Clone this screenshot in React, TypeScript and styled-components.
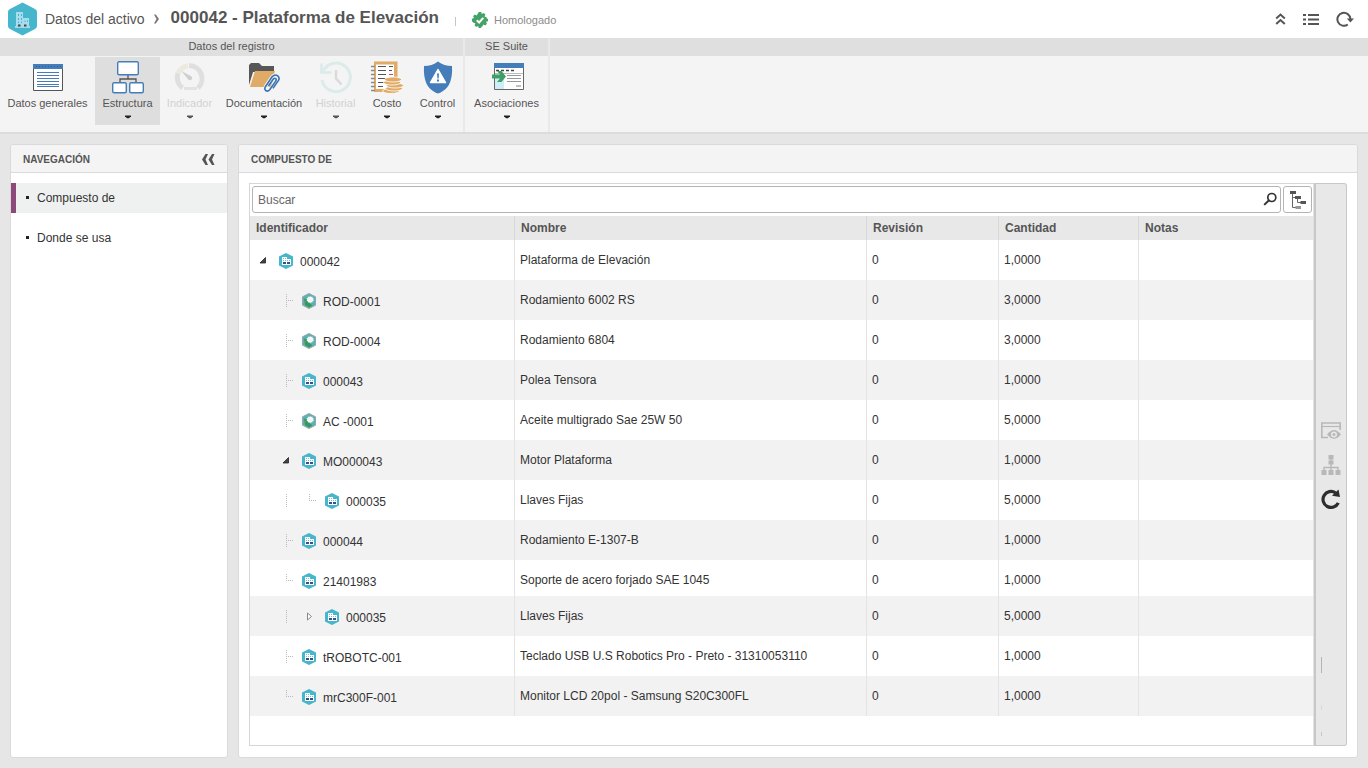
import React from "react";
import styled, { createGlobalStyle, css } from "styled-components";

const GlobalStyle = createGlobalStyle`
  * { box-sizing: border-box; }
  body {
    margin: 0;
    background: #e6e6e6;
    color: #333;
    font-family: "Liberation Sans", Arial, sans-serif;
    font-size: 12px;
    line-height: 16px;
  }
  button { font: inherit; color: inherit; background: none; border: 0; padding: 0; cursor: pointer; }
  svg { display: block; flex: none; }
`;

const Page = styled.div`
  min-height: 100vh;
  display: flex;
  flex-direction: column;
`;

const Header = styled.header`
  display: flex;
  align-items: center;
  height: 38px;
  padding: 0 14px 0 8px;
  background: #fff;
  color: #555;
`;

const Crumb = styled.a`
  margin: 0 8px 0 8px;
  font-size: 14px;
  line-height: 20px;
  color: #555;
  text-decoration: none;
`;

const Title = styled.h1`
  margin: 0 16px 0 11px;
  padding-bottom: 2px;
  font-size: 17px;
  line-height: 20px;
  font-weight: bold;
  color: #555;
`;

const Divider = styled.span`
  width: 1px;
  height: 9px;
  margin: 4px 16px 0 0;
  background: #c4c4c4;
`;

const Status = styled.span`
  display: flex;
  align-items: center;
  gap: 6px;
  padding-top: 2px;
  font-size: 11px;
  color: #8c8c8c;
`;

const HeaderTools = styled.div`
  display: flex;
  align-items: center;
  gap: 17px;
  margin-left: auto;
`;

const Ribbon = styled.div`
  display: flex;
  height: 96px;
  background: #f4f4f4;
  border-bottom: 2px solid #dcdcdc;
`;

const RibbonGroup = styled.section`
  display: flex;
  flex-direction: column;
  border-right: 2px solid #e9e9e9;
`;

const GroupTitle = styled.h2`
  margin: 0;
  height: 18px;
  font-size: 11px;
  line-height: 17px;
  font-weight: normal;
  text-align: center;
  color: #555;
  background: #dfdfdf;
`;

const GroupFill = styled.div`
  flex: 1;
  height: 18px;
  background: #dfdfdf;
`;

const GroupTools = styled.div`
  display: flex;
  padding-top: 1px;
`;

const Tool = styled.button<{ $width: number; $active?: boolean }>`
  display: flex;
  flex-direction: column;
  align-items: center;
  width: ${(p) => p.$width}px;
  height: 68px;
  padding-top: 4px;
  font-size: 11px;
  white-space: nowrap;
  color: #555;
  background: ${(p) => (p.$active ? "#dedede" : "transparent")};
  &:disabled { color: #d2d2d2; cursor: default; }
`;

const ToolLabel = styled.span`
  margin-bottom: 4px;
  line-height: 16px;
`;

const Content = styled.main`
  flex: 1;
  display: flex;
  gap: 10px;
  padding: 10px;
`;

const Panel = styled.section<{ $nav?: boolean }>`
  display: flex;
  flex-direction: column;
  background: #fff;
  border: 1px solid #dadada;
  border-radius: 3px;
  ${(p) =>
    p.$nav
      ? css`flex: 0 0 218px;`
      : css`flex: 1; min-width: 0;`}
`;

const PanelHeader = styled.div`
  display: flex;
  align-items: center;
  justify-content: space-between;
  height: 28px;
  padding: 2px 12px 0;
  background: #f4f4f4;
  border-bottom: 1px solid #dadada;
  border-radius: 3px 3px 0 0;
`;

const PanelTitle = styled.h2`
  margin: 0;
  font-size: 10px;
  font-weight: bold;
  color: #555;
`;

const NavList = styled.nav`
  display: flex;
  flex-direction: column;
  gap: 10px;
  padding-top: 10px;
`;

const NavItem = styled.a<{ $active?: boolean }>`
  display: flex;
  align-items: center;
  gap: 8px;
  height: 30px;
  padding-left: 10px;
  border-left: 5px solid ${(p) => (p.$active ? "#8c4a7b" : "transparent")};
  background: ${(p) => (p.$active ? "#eff1f1" : "transparent")};
  color: #333;
  text-decoration: none;
  &::before {
    content: "";
    width: 3px;
    height: 3px;
    margin-bottom: 2px;
    background: #222;
  }
`;

const PanelBody = styled.div`
  flex: 1;
  display: flex;
  padding: 10px 10px 11px;
`;

const GridBox = styled.div`
  flex: 1;
  min-width: 0;
  border: 1px solid #d6d6d6;
  border-right-color: #e2e2e2;
`;

const SearchBar = styled.div`
  display: flex;
  gap: 2px;
  padding: 2px 1px 3px 2px;
`;

const SearchField = styled.label`
  flex: 1;
  display: flex;
  align-items: center;
  height: 27px;
  padding: 0 3px 0 5px;
  border: 1px solid #b4b4b4;
  border-radius: 3px;
  background: #fff;
`;

const SearchInput = styled.input`
  flex: 1;
  min-width: 0;
  padding: 0;
  border: 0;
  outline: 0;
  font: inherit;
  color: #333;
  background: transparent;
  &::placeholder { color: #666; opacity: 1; }
`;

const TreeButton = styled.button`
  display: flex;
  align-items: center;
  justify-content: center;
  width: 29px;
  height: 27px;
  border: 1px solid #b4b4b4;
  border-radius: 3px;
  background: #fff;
`;

const Table = styled.table`
  width: 100%;
  border-collapse: separate;
  border-spacing: 0;
  table-layout: fixed;
`;

const HeadCell = styled.th`
  height: 24px;
  padding: 0 6px;
  border-left: 1px solid #d8d8d8;
  text-align: left;
  font-weight: bold;
  color: #555;
  background: #e8e8e8;
  &:first-child { border-left: 0; }
`;

const Row = styled.tr<{ $short?: boolean }>`
  height: ${(p) => (p.$short ? 36 : 40)}px;
  background: #fff;
  &:nth-child(even) { background: #f2f2f2; }
`;

const Cell = styled.td`
  padding: 12px 5px 0;
  border-left: 1px solid #e4e4e4;
  vertical-align: top;
`;

const TreeCell = styled.td`
  padding: 13px 0 0 2px;
  vertical-align: top;
`;

const TreeLine = styled.div`
  display: flex;
  height: 16px;
`;

const AssetName = styled.span`
  display: flex;
  gap: 7px;
  padding-left: 4px;
  line-height: 18px;
`;

const SideStrip = styled.aside`
  display: grid;
  grid-template-rows: 1fr auto 1fr;
  width: 33px;
  padding: 0 5px;
  background: #e8e8e8;
  border: 1px solid #c8c8c8;
  border-left-width: 2px;
  border-radius: 0 3px 3px 0;
`;

const StripTools = styled.div`
  grid-row: 2;
  display: flex;
  flex-direction: column;
  gap: 14px;
`;

const StripFoot = styled.div`
  grid-row: 3;
  align-self: end;
  padding-bottom: 8px;
`;

/* ---------- drawings ---------- */

const AssetHexagon = () => (
  <svg width="29" height="34" viewBox="0 0 29 34" aria-hidden="true">
    <path d="M14.500 .5 27 7q2 1 2 3v14q0 2-2 3l-12.500 6.500L2 27q-2-1-2-3V10q0-2 2-3z" fill="#45b6cb" />
    <path d="M8 10h7v14H8z" fill="#a9dcec" />
    <path d="M15 16h6v8h-6z" fill="#a9dcec" />
    <path d="M10 12h1v2h-1zM13 12h1v2h-1zM10 16h1v2h-1zM13 16h1v2h-1zM10 19.500h1v1.500h-1zM13 19.500h1v1.500h-1zM16.500 18.500h1v1.500h-1zM19 18.500h1v1.500h-1z" fill="#45b6cb" />
    <path d="M7 24.500h15v1H7z" fill="#fff" />
    <path d="M10 22.500h2.500v2H10zM16 22.500h2.500v2H16z" fill="#41474f" />
  </svg>
);

const ChevronIcon = () => (
  <svg width="7" height="10" viewBox="0 0 7 10" aria-hidden="true">
    <path d="M1 .5h1.800L6 5 2.800 9.500H1L3.500 5z" fill="#777" />
  </svg>
);

const SealIcon = () => (
  <svg width="16" height="16" viewBox="0 0 16 16" aria-hidden="true">
    <path d="M6.800 0h2.400l.6 2 2-1 1.600 1.600-.9 1.900 2 .7.500 1.600h1v2.400l-2 .6.900 2-1.600 1.600-2-.9-.9 2-1.200.5v1H6.800l-.7-2-2 .9-1.500-1.600.8-2-1.900-.6L0 9.200V6.800l2-.7-.9-1.900L2.700 2.600l2 .9z" fill="#43a266" />
    <path d="m4.800 8.300 2.300 2.200 4.200-4.700" fill="none" stroke="#fff" strokeWidth="2" />
  </svg>
);

const DoubleUpIcon = () => (
  <svg width="11" height="12" viewBox="0 0 11 12" aria-hidden="true">
    <path d="m1.200 5.500 4.300-4 4.300 4M1.200 11l4.300-4 4.300 4" fill="none" stroke="#555" strokeWidth="2" />
  </svg>
);

const ListIcon = () => (
  <svg width="16" height="11" viewBox="0 0 16 11" aria-hidden="true">
    <path d="M0 0h3v2H0zM5 0h11v2H5zM0 4.500h3v2H0zM5 4.500h11v2H5zM0 9h3v2H0zM5 9h11v2H5z" fill="#555" />
  </svg>
);

const ReloadThinIcon = () => (
  <svg width="18" height="16" viewBox="0 0 18 16" aria-hidden="true">
    <path d="M11.800 13.500A6.500 6.500 0 1 1 14.400 8" fill="none" stroke="#555" strokeWidth="2" />
    <path d="M10.800 7.500H18l-3.600 4z" fill="#555" />
  </svg>
);

const CaretDown = ({ faded }: { faded?: boolean }) => (
  <svg width="6" height="4" viewBox="0 0 6 4" aria-hidden="true">
    <path d="M0 .5h6v.8L4 3.300H2L0 1.300z" fill={faded ? "#555" : "#222"} />
  </svg>
);

const GeneralIcon = () => (
  <svg width="34" height="34" viewBox="0 0 34 34" aria-hidden="true">
    <path d="M2.500 4.500h29v25h-29z" fill="#fff" stroke="#555" />
    <path d="M2 3h30v5H2z" fill="#447dba" />
    <path d="M5 5.500h25" stroke="#2d5c92" strokeDasharray="1 2" />
    <path d="M6 11.500h22M6 14.500h22M6 17.500h22M6 20.500h22M6 23.500h22M6 25.500h22" stroke="#447dba" />
  </svg>
);

const StructureIcon = () => (
  <svg width="34" height="34" viewBox="0 0 34 34" aria-hidden="true">
    <path d="M17 14v4M9 21v-3h16v3" fill="none" stroke="#555" strokeWidth="1.300" />
    <g fill="#fff" stroke="#447dba" strokeWidth="1.400">
      <rect x="6.700" y=".7" width="20.600" height="13" rx="1.500" />
      <rect x="1.700" y="21.700" width="13.600" height="10" rx="1.500" />
      <rect x="18.700" y="21.700" width="13.600" height="10" rx="1.500" />
    </g>
  </svg>
);

const GaugeIcon = () => (
  <svg width="34" height="34" viewBox="0 0 34 34" aria-hidden="true">
    <path d="M9.500 27A13 13 0 0 1 5 12" fill="none" stroke="#dfdfdf" strokeWidth="5" />
    <path d="M5.200 12A13 13 0 0 1 15 4.700" fill="none" stroke="#ece9df" strokeWidth="5" />
    <path d="M16 4.600A13 13 0 0 1 25 27" fill="none" stroke="#dfdfdf" strokeWidth="5" />
    <path d="M11 26h13v3H11z" fill="#e3e3e3" />
    <path d="m8.500 10 10 5.500q1.500 2-.5 3.500-2 .5-3-.8z" fill="#cfcfcf" />
  </svg>
);

const DocumentsIcon = () => (
  <svg width="34" height="34" viewBox="0 0 34 34" aria-hidden="true">
    <path d="M2 24V4l2-2h8l3 3h12v6H6z" fill="#575757" />
    <path d="M8 10h20l-4 16H3z" fill="#e0ab66" />
    <path d="m20.500 25 6.500-9.500q2-1.500 3.600.2.900 1.500-.2 3.300l-7 9.500q-2 2.200-4.300.6-1.700-1.600-.4-3.800L25 16q2.500-3 5.500-1.200 2.500 2 .8 4.700" fill="none" stroke="#f4f4f4" strokeWidth="3.500" />
    <path d="m21.500 25 5-7.200q1.300-1.100 2.400 0 .7 1-.2 2.300l-6 8.700q-2 2.200-4 .7-1.600-1.500-.3-3.800l6.700-9.900q2.800-3 5.600-1 2.300 2 .8 4.600l-5.500 8" fill="none" stroke="#3973b4" strokeWidth="1.600" />
  </svg>
);

const HistoryIcon = () => (
  <svg width="34" height="34" viewBox="0 0 34 34" aria-hidden="true">
    <path d="M4.500 9.500A14.300 14.300 0 1 1 3 19" fill="none" stroke="#dcebea" strokeWidth="3" />
    <path d="M2.500 2.500v9h10" fill="none" stroke="#d9eae9" strokeWidth="2.500" />
    <path d="M17 9v8.500l5.500 6" fill="none" stroke="#dadada" strokeWidth="2.500" />
  </svg>
);

const CostIcon = () => (
  <svg width="34" height="34" viewBox="0 0 34 34" aria-hidden="true">
    <path d="M4 .5h23.500V31H4z" fill="#e0ab66" />
    <path d="M6 3.500h18V28H6z" fill="#fff" />
    <path d="M8 5.500h8M19 5.500h4M8 9.500h8M19 9.500h3M8 13.500h8M8 17.500h8M19 17.500h3M8 21.500h6M8 25.500h5" stroke="#555" />
    <path d="M19 13.500h4" stroke="#b8506f" />
    <path d="M1 5.500h4M1 9.500h4M1 13.500h4M1 17.500h4M1 21.500h4M1 25.500h4M1 29.500h4" stroke="#8a8a8a" strokeWidth="1.600" />
    <g fill="#e0ab66" stroke="#fff" strokeWidth=".8">
      <ellipse cx="21" cy="30" rx="8.500" ry="2.500" />
      <ellipse cx="24" cy="27.500" rx="8.500" ry="2.500" />
      <ellipse cx="25" cy="24.500" rx="8.500" ry="2.500" />
      <ellipse cx="22" cy="21.500" rx="8.500" ry="2.500" />
      <ellipse cx="23" cy="18.500" rx="8.500" ry="2.500" />
    </g>
  </svg>
);

const ShieldIcon = () => (
  <svg width="34" height="34" viewBox="0 0 34 34" aria-hidden="true">
    <path d="M17 .5Q23 5 31 5q1 19-9 25-3 2-5 2.500-2-.5-5-2.500Q2 24 3 5 11 5 17 .5z" fill="#447dba" />
    <path d="M17 8.500 24.500 21.500h-15z" fill="#fff" stroke="#fff" strokeWidth="1.500" strokeLinejoin="round" />
    <path d="M16 12.500h2l-.4 5h-1.200zM16 18.500h2v2h-2z" fill="#447dba" />
  </svg>
);

const LinksIcon = () => (
  <svg width="34" height="34" viewBox="0 0 34 34" aria-hidden="true">
    <path d="M4.500 4.500h29v24h-29z" fill="#fff" stroke="#666" />
    <path d="M4 2h30v5H4z" fill="#447dba" />
    <path d="M6 9.500h3M11 9.500h3M16 9.500h3M21 9.500h3" stroke="#444" strokeWidth="1.600" />
    <path d="M5 12.500h28" stroke="#bbb" />
    <path d="M5 13h9v15H5z" fill="#cdeef6" />
    <path d="M17 14.500h14M17 17.500h14M17 20.500h14" stroke="#999" />
    <path d="M26 25h5" stroke="#aaa" strokeWidth="1.500" />
    <path d="M2 13.500h8L7 10h4.500L16 15.500 11.500 21H7l3-3.500H2z" fill="#3f9f69" />
  </svg>
);

const DoubleLeftIcon = () => (
  <svg width="13" height="11" viewBox="0 0 13 11" aria-hidden="true">
    <path d="M3.500 0H6L3.500 5.500 6 11H3.500L0 5.500zM10 0h2.500L10 5.500l2.500 5.500H10L6.500 5.500z" fill="#555" />
  </svg>
);

const SearchIcon = () => (
  <svg width="14" height="16" viewBox="0 0 14 16" aria-hidden="true">
    <circle cx="8.800" cy="5.500" r="4" fill="none" stroke="#333" strokeWidth="1.700" />
    <path d="m6 8.300-4.800 4.600" stroke="#333" strokeWidth="2" />
  </svg>
);

const TreeIcon = () => (
  <svg width="17" height="20" viewBox="0 0 17 20" aria-hidden="true">
    <path d="M3.500 3v14.500H7M3.500 7.500H8M8.500 8v4.500H13" fill="none" stroke="#666" />
    <path d="M1 1h6v3H1zM6 6h6v3H6zM11.500 11h5.500v3h-5.500z" fill="#555" />
    <path d="M6.500 16H12v3H6.500z" fill="#999" />
  </svg>
);

const BuildingMark = () => (
  <svg width="14" height="16" viewBox="0 0 14 16" aria-hidden="true">
    <path d="M7 0l7 3.500v9L7 16l-7-3.500v-9z" fill="#45b6cb" />
    <path d="M3 4h5v2h4v6H3z" fill="#fff" />
    <path d="M4 5h1v1H4zM6 5h1v1H6zM4 7h1v1H4zM6 7h1v1H6zM8 7h1v1H8zM10 7h1v1h-1z" fill="#6fc5d6" />
    <path d="M4 9h3v2H4zM8 9h3v2H8z" fill="#3d4f86" />
  </svg>
);

const PartMark = () => (
  <svg width="14" height="16" viewBox="0 0 14 16" aria-hidden="true">
    <path d="M7 .5l6.500 3.300v8.400L7 15.500.5 12.200V3.800z" fill="#59b3b4" stroke="#9aa3a8" />
    <path d="M2 5.500l4 1.500v2l4.500 3.500L7 14.500 3 12z" fill="#349a5b" />
    <path d="m8.200 3 .8 1 1.300-.4.300 1.300 1.300.5-.6 1.200.6 1.200-1.300.5-.3 1.300L9 9.300l-.8 1-.9-1-1.300.3-.2-1.300-1.200-.5.500-1.200-.5-1.200 1.200-.5.200-1.300 1.300.4z" fill="#f2f7f6" />
    <path d="M2.500 10l1.500-2" stroke="#8c7f8f" />
  </svg>
);

const WindowEyeIcon = () => (
  <svg width="21" height="20" viewBox="0 0 21 20" aria-hidden="true">
    <path d="M7 16.500H.8V2h18.400v7" fill="none" stroke="#b8b8b8" strokeWidth="1.600" />
    <path d="M0 5.500h20" stroke="#b8b8b8" strokeWidth="1.200" />
    <path d="M6 13.500Q13 4.500 20 13.500 13 22 6 13.500z" fill="#b8b8b8" />
    <circle cx="13" cy="13.500" r="3" fill="#e8e8e8" />
    <circle cx="13" cy="13.500" r="1.500" fill="#b8b8b8" />
  </svg>
);

const OrgIcon = () => (
  <svg width="20" height="20" viewBox="0 0 20 20" aria-hidden="true">
    <path d="M7.500 0h5v4.500h-5zM7.500 5.500h5v4h-5zM.5 15h5v5h-5zM7.500 15h5v5h-5zM14.500 15h5v5h-5z" fill="#b8b8b8" />
    <path d="M10 4v11M3 15v-2.500h14V15" fill="none" stroke="#b8b8b8" strokeWidth="1.400" />
  </svg>
);

const ReloadBoldIcon = () => (
  <svg width="20" height="20" viewBox="0 0 20 20" aria-hidden="true">
    <path d="M17.300 13.800A8 8 0 1 1 14.500 3.800" fill="none" stroke="#2d2d2d" strokeWidth="3.200" />
    <path d="M17.500.5 19 8l-8-1.200z" fill="#2d2d2d" />
  </svg>
);

const StripMarks = () => (
  <svg width="3" height="80" viewBox="0 0 3 80" aria-hidden="true">
    <path d="M.5 0v16" stroke="#b4b4b4" />
    <path d="M.5 48v5" stroke="#d8d8d8" />
    <path d="M.5 75v4" stroke="#c4c4c4" />
  </svg>
);

type Branch = "empty" | "line" | "tee" | "elbow" | "open" | "closed";

const branchPaths: Record<"line" | "tee" | "elbow", string> = {
  line: "M11.500 1v14",
  tee: "M11.500 1v14M13 7.500h6",
  elbow: "M11.500 1v7M13 7.500h6",
};

const BranchMark = ({ kind }: { kind: Branch }) => (
  <svg width="23" height="16" viewBox="0 0 23 16" aria-hidden="true">
    {kind === "open" && <path d="M13.500 4.500V10H8z" fill="#444" stroke="#222" strokeWidth=".8" />}
    {kind === "closed" && <path d="M9.500 4v7l4-3.500z" fill="#fff" stroke="#888" />}
    {(kind === "line" || kind === "tee" || kind === "elbow") && (
      <path d={branchPaths[kind]} stroke="#b8b8b8" strokeDasharray="1 1" fill="none" />
    )}
  </svg>
);

/* ---------- data ---------- */

interface ToolItem {
  label: string;
  width: number;
  icon: React.ReactNode;
  menu?: boolean;
  active?: boolean;
  disabled?: boolean;
}

const recordTools: ToolItem[] = [
  { label: "Datos generales", width: 95, icon: <GeneralIcon /> },
  { label: "Estructura", width: 65, icon: <StructureIcon />, menu: true, active: true },
  { label: "Indicador", width: 59, icon: <GaugeIcon />, menu: true, disabled: true },
  { label: "Documentación", width: 90, icon: <DocumentsIcon />, menu: true },
  { label: "Historial", width: 53, icon: <HistoryIcon />, menu: true, disabled: true },
  { label: "Costo", width: 50, icon: <CostIcon />, menu: true },
  { label: "Control", width: 51, icon: <ShieldIcon />, menu: true },
];

const suiteTools: ToolItem[] = [
  { label: "Asociaciones", width: 83, icon: <LinksIcon />, menu: true },
];

interface Asset {
  branches: Branch[];
  part?: boolean;
  short?: boolean;
  id: string;
  name: string;
  quantity: string;
}

const assets: Asset[] = [
  { branches: ["open"], id: "000042", name: "Plataforma de Elevación", quantity: "1,0000" },
  { branches: ["empty", "tee"], part: true, id: "ROD-0001", name: "Rodamiento 6002 RS", quantity: "3,0000" },
  { branches: ["empty", "tee"], part: true, id: "ROD-0004", name: "Rodamiento 6804", quantity: "3,0000" },
  { branches: ["empty", "tee"], id: "000043", name: "Polea Tensora", quantity: "1,0000" },
  { branches: ["empty", "tee"], part: true, id: "AC -0001", name: "Aceite multigrado Sae 25W 50", quantity: "5,0000" },
  { branches: ["empty", "open"], id: "MO000043", name: "Motor Plataforma", quantity: "1,0000" },
  { branches: ["empty", "line", "elbow"], id: "000035", name: "Llaves Fijas", quantity: "5,0000" },
  { branches: ["empty", "tee"], id: "000044", name: "Rodamiento E-1307-B", quantity: "1,0000" },
  { branches: ["empty", "elbow"], short: true, id: "21401983", name: "Soporte de acero forjado SAE 1045", quantity: "1,0000" },
  { branches: ["empty", "line", "closed"], id: "000035", name: "Llaves Fijas", quantity: "5,0000" },
  { branches: ["empty", "tee"], id: "tROBOTC-001", name: "Teclado USB U.S Robotics Pro - Preto - 31310053110", quantity: "1,0000" },
  { branches: ["empty", "elbow"], id: "mrC300F-001", name: "Monitor LCD 20pol - Samsung S20C300FL", quantity: "1,0000" },
];

const ToolGroup = ({ title, tools }: { title: string; tools: ToolItem[] }) => (
  <RibbonGroup>
    <GroupTitle>{title}</GroupTitle>
    <GroupTools>
      {tools.map((tool) => (
        <Tool key={tool.label} $width={tool.width} $active={tool.active} disabled={tool.disabled}>
          {tool.icon}
          <ToolLabel>{tool.label}</ToolLabel>
          {tool.menu && <CaretDown faded={tool.disabled} />}
        </Tool>
      ))}
    </GroupTools>
  </RibbonGroup>
);

export default function App() {
  return (
    <Page>
      <GlobalStyle />
      <Header>
        <AssetHexagon />
        <Crumb href="#activo">Datos del activo</Crumb>
        <ChevronIcon />
        <Title>000042 - Plataforma de Elevación</Title>
        <Divider />
        <Status>
          <SealIcon />
          Homologado
        </Status>
        <HeaderTools>
          <button aria-label="Contraer"><DoubleUpIcon /></button>
          <button aria-label="Lista"><ListIcon /></button>
          <button aria-label="Recargar"><ReloadThinIcon /></button>
        </HeaderTools>
      </Header>
      <Ribbon>
        <ToolGroup title="Datos del registro" tools={recordTools} />
        <ToolGroup title="SE Suite" tools={suiteTools} />
        <GroupFill />
      </Ribbon>
      <Content>
        <Panel $nav>
          <PanelHeader>
            <PanelTitle>NAVEGACIÓN</PanelTitle>
            <button aria-label="Ocultar navegación"><DoubleLeftIcon /></button>
          </PanelHeader>
          <NavList>
            <NavItem href="#compuesto" $active>Compuesto de</NavItem>
            <NavItem href="#uso">Donde se usa</NavItem>
          </NavList>
        </Panel>
        <Panel>
          <PanelHeader>
            <PanelTitle>COMPUESTO DE</PanelTitle>
          </PanelHeader>
          <PanelBody>
            <GridBox>
              <SearchBar>
                <SearchField>
                  <SearchInput type="text" placeholder="Buscar" aria-label="Buscar" />
                  <SearchIcon />
                </SearchField>
                <TreeButton aria-label="Ver árbol"><TreeIcon /></TreeButton>
              </SearchBar>
              <Table>
                <colgroup>
                  <col style={{ width: 264 }} />
                  <col style={{ width: 352 }} />
                  <col style={{ width: 132 }} />
                  <col style={{ width: 140 }} />
                  <col />
                </colgroup>
                <thead>
                  <tr>
                    <HeadCell scope="col">Identificador</HeadCell>
                    <HeadCell scope="col">Nombre</HeadCell>
                    <HeadCell scope="col">Revisión</HeadCell>
                    <HeadCell scope="col">Cantidad</HeadCell>
                    <HeadCell scope="col">Notas</HeadCell>
                  </tr>
                </thead>
                <tbody>
                  {assets.map((asset, index) => (
                    <Row key={index} $short={asset.short}>
                      <TreeCell>
                        <TreeLine>
                          {asset.branches.map((kind, i) => (
                            <BranchMark key={i} kind={kind} />
                          ))}
                          <AssetName>
                            {asset.part ? <PartMark /> : <BuildingMark />}
                            {asset.id}
                          </AssetName>
                        </TreeLine>
                      </TreeCell>
                      <Cell>{asset.name}</Cell>
                      <Cell>0</Cell>
                      <Cell>{asset.quantity}</Cell>
                      <Cell />
                    </Row>
                  ))}
                </tbody>
              </Table>
            </GridBox>
            <SideStrip>
              <StripTools>
                <button aria-label="Visualizar" disabled><WindowEyeIcon /></button>
                <button aria-label="Organigrama" disabled><OrgIcon /></button>
                <button aria-label="Actualizar"><ReloadBoldIcon /></button>
              </StripTools>
              <StripFoot><StripMarks /></StripFoot>
            </SideStrip>
          </PanelBody>
        </Panel>
      </Content>
    </Page>
  );
}
